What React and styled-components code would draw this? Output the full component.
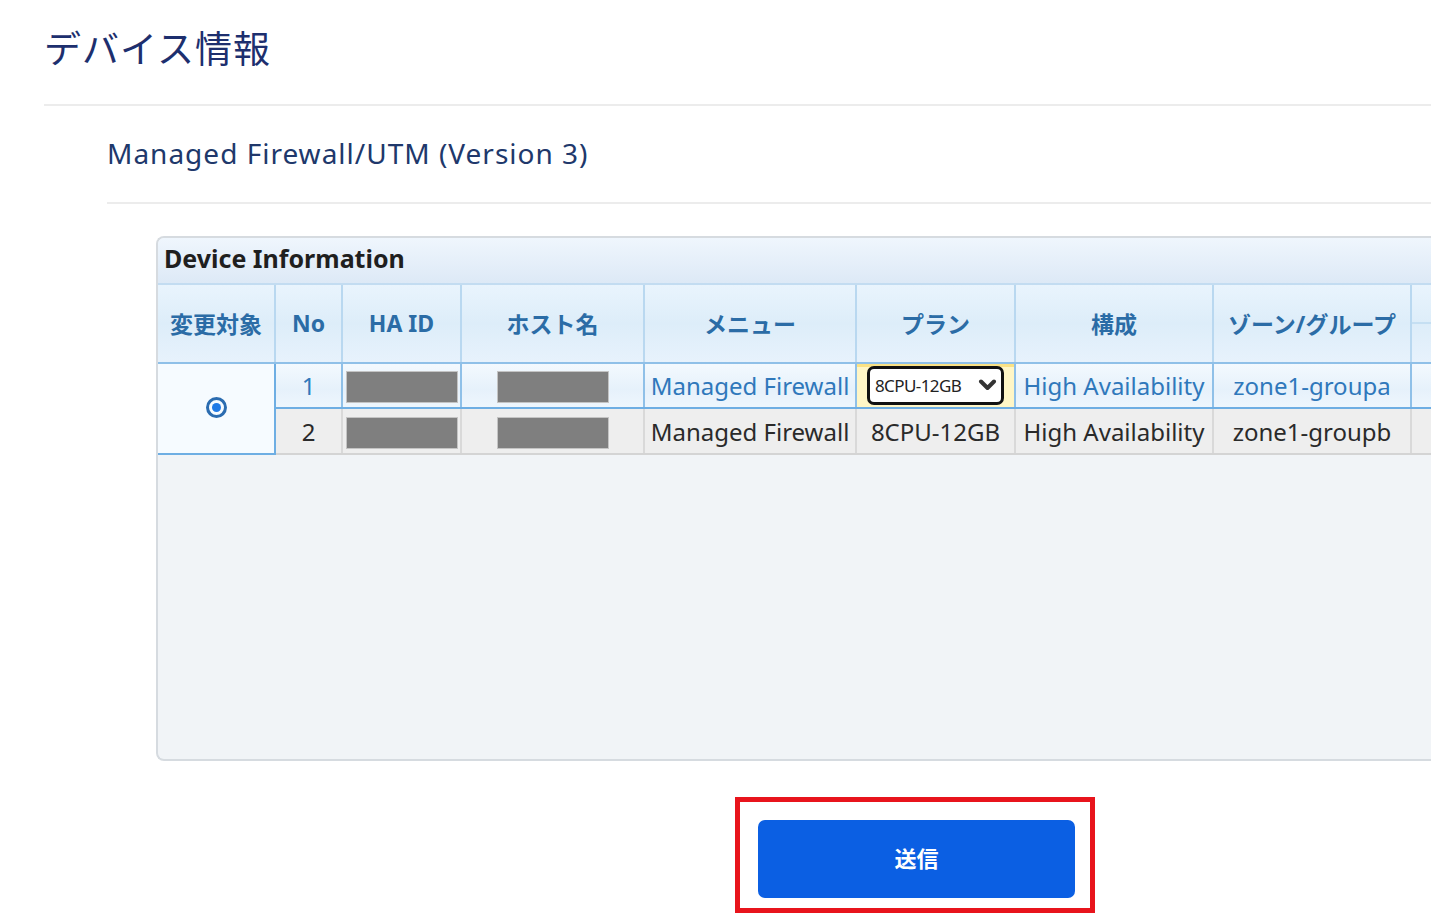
import React from 'react';
import styled, { createGlobalStyle } from 'styled-components';

const GlobalStyle = createGlobalStyle`
  html, body {
    margin: 0;
    padding: 0;
    background: #ffffff;
    overflow: hidden;
  }
  body {
    font-family: "Noto Sans", "Noto Sans CJK JP", sans-serif;
  }
`;

const Page = styled.div`
  width: 100vw;
  overflow: hidden;
  padding-left: 44px;
  box-sizing: border-box;
`;

const Title = styled.h1`
  margin: 0;
  padding-top: 26px;
  font-size: 37px;
  line-height: 46px;
  font-weight: 400;
  color: #1d2f6e;
  letter-spacing: 1px;
`;

const Rule = styled.div`
  height: 2px;
  background: #ececec;
  margin-top: ${(p) => p.$top}px;
  width: 2000px;
`;

const Section = styled.div`
  padding-top: 30px;
  padding-left: 63px;
`;

const Subtitle = styled.h2`
  margin: 0;
  font-size: 28px;
  line-height: 34px;
  font-weight: 400;
  letter-spacing: 1px;
  color: #20386b;
`;

const Content = styled.div`
  margin-left: 49px;
  margin-top: 32px;
  width: 1518px;
`;

const Panel = styled.div`
  box-sizing: border-box;
  width: 100%;
  height: 525px;
  background: #f1f4f7;
  border: 2px solid #d6dbe0;
  border-right: none;
  border-radius: 8px 0 0 8px;
  overflow: hidden;
`;

const PanelHeader = styled.div`
  box-sizing: border-box;
  height: 47px;
  display: flex;
  align-items: center;
  padding: 0 0 5px 6px;
  background: linear-gradient(#eff6fd, #dde9f6);
  font-size: 25px;
  font-weight: 700;
  color: #1f1f1f;
  border-bottom: 2px solid #c3dcf1;
`;

const Table = styled.table`
  width: 100%;
  table-layout: fixed;
  border-collapse: collapse;
`;

const Th = styled.th`
  height: 75px;
  padding: 0 0 2px;
  font-size: 23px;
  font-weight: 700;
  color: #2b6ca6;
  text-align: center;
  white-space: nowrap;
  background: linear-gradient(#e9f4fd, #ddedf9 50%, #e7f2fc);
  border-left: 2px solid #b9d8f0;
  border-bottom: 2px solid #8fc0e8;
  &:first-child {
    border-left: none;
  }
`;

const SplitHead = styled.div`
  height: 36px;
  border-bottom: ${(p) => (p.$line ? '2px solid #c5dff2' : 'none')};
`;

const Td = styled.td`
  height: ${(p) => (p.$first ? 43 : 44)}px;
  padding: 0;
  font-size: 24px;
  text-align: center;
  white-space: nowrap;
  overflow: hidden;
  color: ${(p) => (p.$first ? '#2f78bb' : '#2a2a2a')};
  background: ${(p) =>
    p.$highlight
      ? '#fff6c6'
      : p.$first
      ? 'linear-gradient(#f3f9fe, #e6f1fb 60%, #eef6fd)'
      : '#eeeeee'};
  border-left: 2px solid ${(p) => (p.$first ? '#8fc0e8' : '#d9d9d9')};
  border-bottom: 2px solid ${(p) => (p.$first ? '#6eaee3' : '#d4d4d4')};
  box-shadow: ${(p) => (p.$highlight ? 'inset 0 3px 0 #fbe285' : 'none')};
`;

const RadioCell = styled.td`
  padding: 0 0 4px;
  text-align: center;
  background: #f6fbff;
  border-right: 2px solid #6eaee3;
  border-bottom: 2px solid #6eaee3;
`;

const Radio = styled.span`
  display: inline-block;
  box-sizing: border-box;
  width: 21px;
  height: 21px;
  border: 3px solid #2b6cb0;
  border-radius: 50%;
  position: relative;
  vertical-align: middle;
  &::after {
    content: '';
    position: absolute;
    left: 3px;
    top: 3px;
    width: 9px;
    height: 9px;
    border-radius: 50%;
    background: #1f7ae6;
  }
`;

const Redacted = styled.span`
  display: inline-block;
  width: 110px;
  height: 30px;
  background: #7f7f7f;
  border: 1px solid #c4c4c4;
  vertical-align: middle;
`;

const SelectWrap = styled.div`
  position: relative;
  display: inline-block;
  vertical-align: middle;
`;

const Select = styled.select`
  appearance: none;
  box-sizing: border-box;
  width: 137px;
  height: 39px;
  border: 3px solid #111111;
  border-radius: 7px;
  background: #ffffff;
  padding: 0 0 0 5px;
  font-family: "Noto Sans", sans-serif;
  font-size: 17px;
  letter-spacing: -0.6px;
  color: #222;
  outline: none;
`;

const Chevron = styled.svg`
  position: absolute;
  right: 7px;
  top: 13px;
  pointer-events: none;
`;

const Actions = styled.div`
  display: flex;
  justify-content: center;
  margin-top: 36px;
`;

const Highlight = styled.div`
  border: 5px solid #e8141c;
  padding: 18px 15px 10px 18px;
`;

const SubmitButton = styled.button`
  width: 317px;
  height: 78px;
  padding-bottom: 5px;
  border: none;
  border-radius: 7px;
  background: #0b5fe3;
  color: #ffffff;
  font-family: "Noto Sans CJK JP", sans-serif;
  font-size: 22px;
  font-weight: 700;
  cursor: pointer;
`;

const cols = [117, 67, 119, 183, 212, 159, 198, 198, 263];

const rows = [
  { no: 1, menu: 'Managed Firewall', plan: '8CPU-12GB', conf: 'High Availability', zone: 'zone1-groupa', first: true },
  { no: 2, menu: 'Managed Firewall', plan: '8CPU-12GB', conf: 'High Availability', zone: 'zone1-groupb', first: false },
];

export default function App() {
  return (
    <>
      <GlobalStyle />
      <Page>
        <Title>デバイス情報</Title>
        <Rule $top={32} />
        <Section>
          <Subtitle>Managed Firewall/UTM (Version 3)</Subtitle>
          <Rule $top={32} />
          <Content>
            <Panel>
              <PanelHeader>Device Information</PanelHeader>
              <Table>
                <colgroup>
                  {cols.map((w, i) => (
                    <col key={i} style={{ width: w }} />
                  ))}
                </colgroup>
                <thead>
                  <tr>
                    <Th>変更対象</Th>
                    <Th>No</Th>
                    <Th>HA ID</Th>
                    <Th>ホスト名</Th>
                    <Th>メニュー</Th>
                    <Th>プラン</Th>
                    <Th>構成</Th>
                    <Th>ゾーン/グループ</Th>
                    <Th>
                      <SplitHead $line />
                      <SplitHead />
                    </Th>
                  </tr>
                </thead>
                <tbody>
                  {rows.map((r) => (
                    <tr key={r.no}>
                      {r.first && (
                        <RadioCell rowSpan={2}>
                          <Radio />
                        </RadioCell>
                      )}
                      <Td $first={r.first}>{r.no}</Td>
                      <Td $first={r.first}>
                        <Redacted />
                      </Td>
                      <Td $first={r.first}>
                        <Redacted />
                      </Td>
                      <Td $first={r.first}>{r.menu}</Td>
                      {r.first ? (
                        <Td $first $highlight>
                          <SelectWrap>
                            <Select defaultValue={r.plan}>
                              <option>{r.plan}</option>
                            </Select>
                            <Chevron width="19" height="13" viewBox="0 0 19 13">
                              <path d="M3 2.5 L9.5 9 L16 2.5" fill="none" stroke="#333" strokeWidth="4" strokeLinecap="round" strokeLinejoin="round" />
                            </Chevron>
                          </SelectWrap>
                        </Td>
                      ) : (
                        <Td>{r.plan}</Td>
                      )}
                      <Td $first={r.first}>{r.conf}</Td>
                      <Td $first={r.first}>{r.zone}</Td>
                      <Td $first={r.first} />
                    </tr>
                  ))}
                </tbody>
              </Table>
            </Panel>
            <Actions>
              <Highlight>
                <SubmitButton type="button">送信</SubmitButton>
              </Highlight>
            </Actions>
          </Content>
        </Section>
      </Page>
    </>
  );
}
